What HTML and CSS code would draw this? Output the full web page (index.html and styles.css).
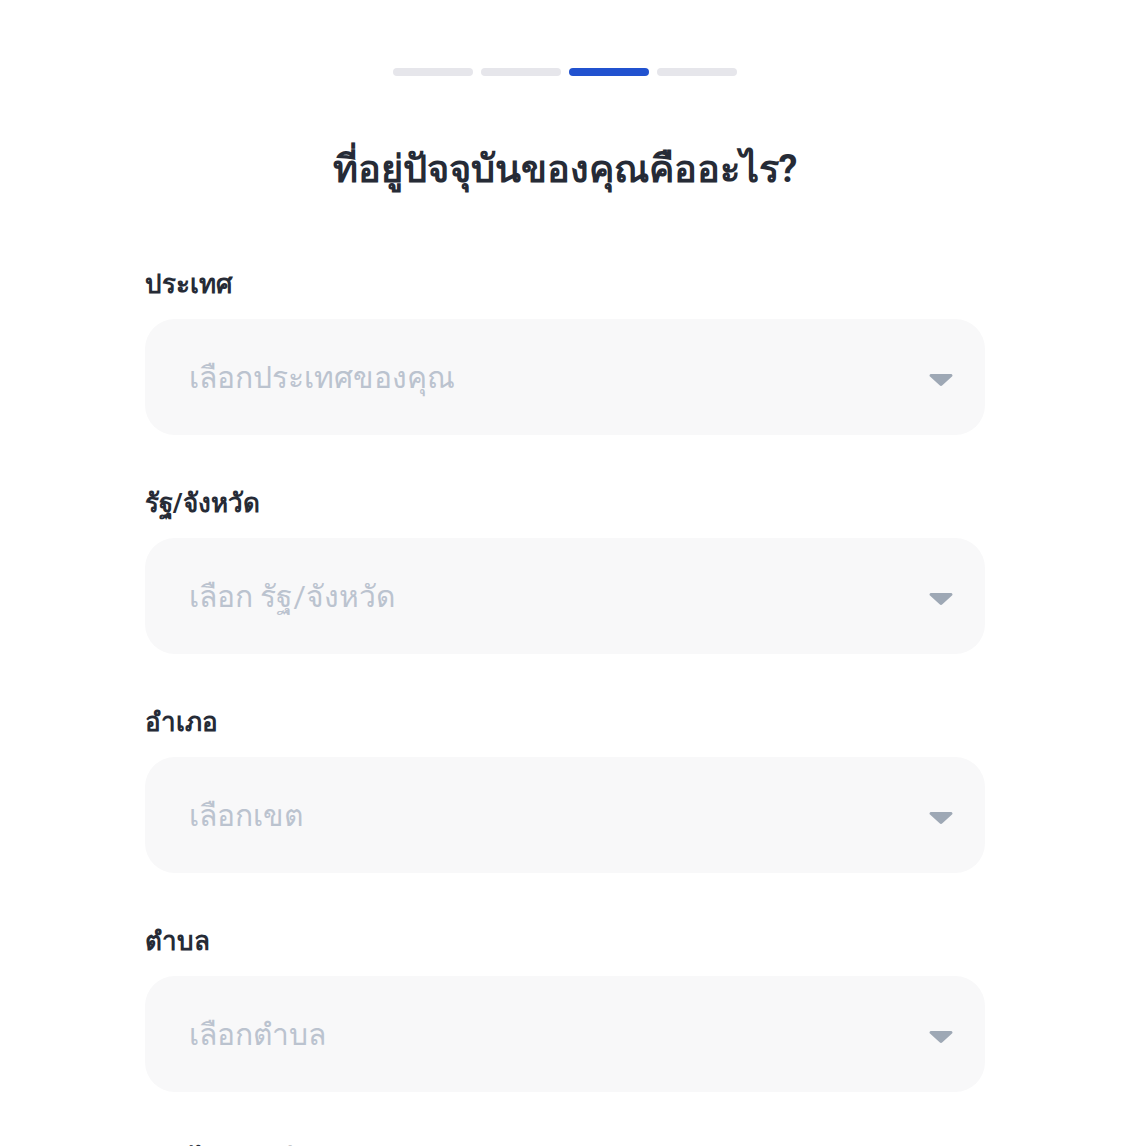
FILE: index.html
```
<!DOCTYPE html>
<html lang="th">
<head>
  <meta charset="UTF-8" />
  <title>ที่อยู่ปัจจุบัน</title>
  <link rel="stylesheet" href="styles.css">
</head>
<body>

  <div id="formulario">
    <!-- Progresso -->
    <div class="passos">
      <span class="passo"></span>
      <span class="passo"></span>
      <span class="passo ativo"></span>
      <span class="passo"></span>
    </div>

    <h1 class="titulo">ที่อยู่ปัจจุบันของคุณคืออะไร?</h1>

    <div class="campo">
      <label>ประเทศ</label>
      <div class="seletor">
        <span>เลือกประเทศของคุณ</span>
        <svg class="seta" width="24" height="14" viewBox="0 0 24 14"><path d="M2 1h20a1.5 1.5 0 0 1 1 2.6l-9.6 8.6a2 2 0 0 1-2.8 0L1 3.6A1.5 1.5 0 0 1 2 1z" fill="#9ea8b5"/></svg>
      </div>
    </div>

    <div class="campo">
      <label>รัฐ/จังหวัด</label>
      <div class="seletor">
        <span>เลือก รัฐ/จังหวัด</span>
        <svg class="seta" width="24" height="14" viewBox="0 0 24 14"><path d="M2 1h20a1.5 1.5 0 0 1 1 2.6l-9.6 8.6a2 2 0 0 1-2.8 0L1 3.6A1.5 1.5 0 0 1 2 1z" fill="#9ea8b5"/></svg>
      </div>
    </div>

    <div class="campo">
      <label>อำเภอ</label>
      <div class="seletor">
        <span>เลือกเขต</span>
        <svg class="seta" width="24" height="14" viewBox="0 0 24 14"><path d="M2 1h20a1.5 1.5 0 0 1 1 2.6l-9.6 8.6a2 2 0 0 1-2.8 0L1 3.6A1.5 1.5 0 0 1 2 1z" fill="#9ea8b5"/></svg>
      </div>
    </div>

    <div class="campo">
      <label>ตำบล</label>
      <div class="seletor">
        <span>เลือกตำบล</span>
        <svg class="seta" width="24" height="14" viewBox="0 0 24 14"><path d="M2 1h20a1.5 1.5 0 0 1 1 2.6l-9.6 8.6a2 2 0 0 1-2.8 0L1 3.6A1.5 1.5 0 0 1 2 1z" fill="#9ea8b5"/></svg>
      </div>
    </div>

    <div class="campo">
      <label>รหัสไปรษณีย์</label>
      <div class="seletor">
        <span>กรอกรหัสไปรษณีย์</span>
      </div>
    </div>
  </div>

</body>
</html>
```

FILE: styles.css
```
body {
  margin: 0;
  padding: 0 2px 0 0;
  background-color: #ffffff;
  font-family: Roboto, sans-serif;
  color: #262b36;
}

#formulario {
  width: 840px;
  margin: 0 auto;
  padding-top: 68px;
}

.passos {
  display: flex;
  justify-content: center;
  gap: 8px;
}

.passo {
  width: 80px;
  height: 8px;
  border-radius: 4px;
  background: #e6e6eb;
}

.passo.ativo {
  background: #2152cf;
}

.titulo {
  margin: 65px 0 69px;
  text-align: center;
  font-size: 38px;
  font-weight: 700;
  line-height: 56px;
}

.campo {
  margin-bottom: 50px;
}

.campo label {
  display: block;
  font-size: 26px;
  font-weight: 700;
  line-height: 36px;
  margin-bottom: 17px;
}

.seletor {
  height: 116px;
  border-radius: 30px;
  background: #f8f8f9;
  padding: 0 32px 0 44px;
  display: flex;
  align-items: center;
  justify-content: space-between;
  font-size: 30px;
  color: #bbc3cf;
}

.seta {
  margin-top: 6px;
}
```
